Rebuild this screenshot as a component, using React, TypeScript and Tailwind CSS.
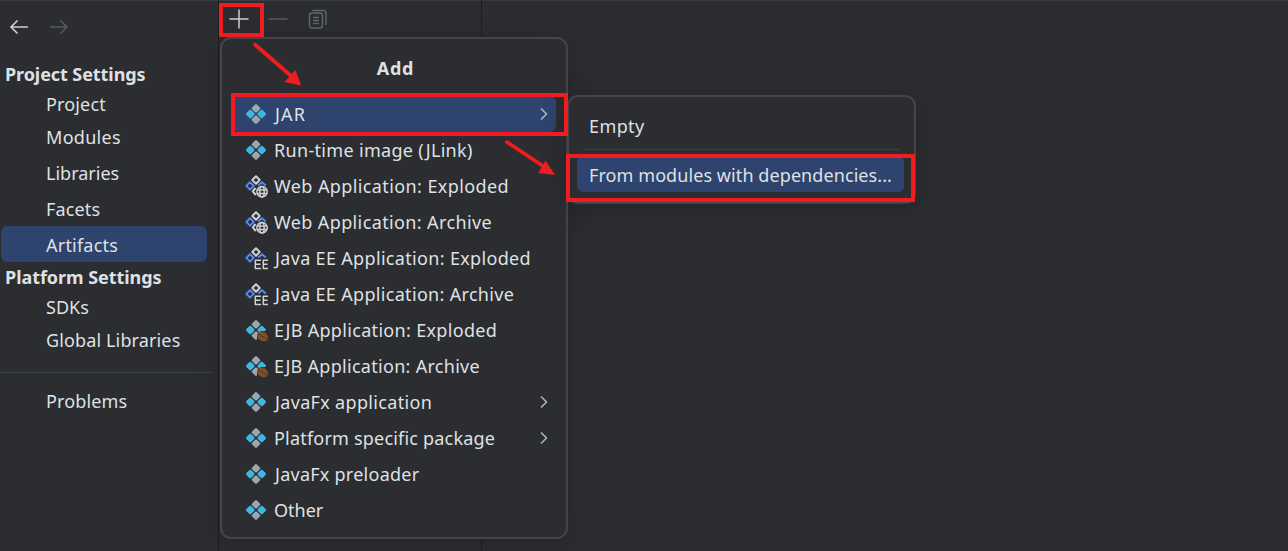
import type { ReactNode } from "react";

type IconKind = "plain" | "web" | "ee" | "ejb";

interface MenuEntry {
  label: string;
  icon: IconKind;
  submenu?: boolean;
  selected?: boolean;
  tracking: string;
}

const entries: MenuEntry[] = [
  { label: "JAR", icon: "plain", submenu: true, selected: true, tracking: "tracking-[1.2px]" },
  { label: "Run-time image (JLink)", icon: "plain", tracking: "tracking-[0.32px]" },
  { label: "Web Application: Exploded", icon: "web", tracking: "tracking-[0.4px]" },
  { label: "Web Application: Archive", icon: "web", tracking: "tracking-[0.38px]" },
  { label: "Java EE Application: Exploded", icon: "ee", tracking: "tracking-[0.33px]" },
  { label: "Java EE Application: Archive", icon: "ee", tracking: "tracking-[0.32px]" },
  { label: "EJB Application: Exploded", icon: "ejb", tracking: "tracking-[0.32px]" },
  { label: "EJB Application: Archive", icon: "ejb", tracking: "tracking-[0.29px]" },
  { label: "JavaFx application", icon: "plain", submenu: true, tracking: "tracking-[0.33px]" },
  { label: "Platform specific package", icon: "plain", submenu: true, tracking: "tracking-[0.2px]" },
  { label: "JavaFx preloader", icon: "plain", tracking: "tracking-[0.25px]" },
  { label: "Other", icon: "plain", tracking: "tracking-normal" },
];

function Diamond({ x, y, className }: { x: number; y: number; className: string }) {
  return (
    <rect
      x={x - 3.4}
      y={y - 3.4}
      width="6.8"
      height="6.8"
      rx="1.3"
      transform={`rotate(45 ${x} ${y})`}
      className={className}
    />
  );
}

function ArtifactIcon({ kind }: { kind: IconKind }) {
  if (kind === "plain" || kind === "ejb") {
    return (
      <svg viewBox="0 0 24 24" className="size-6 shrink-0">
        <Diamond x={12} y={6.3} className="fill-[#9aa7b0]" />
        <Diamond x={6.3} y={12} className="fill-[#40b6e0]" />
        <Diamond x={17.7} y={12} className="fill-[#40b6e0]" />
        <Diamond x={12} y={17.7} className="fill-[#9aa7b0]" />
        {kind === "ejb" && (
          <>
            <path d="M13 24V17.500L17 12.500H24V24Z" className="fill-[#2b2d30]" />
            <path d="M13.500 13H22l-3.200-3.500Z" className="fill-[#40b6e0]" />
            <ellipse cx="18.6" cy="18.4" rx="5.8" ry="4.5" transform="rotate(35 18.6 18.4)" className="fill-[#825027]" />
            <path d="M14 16.200c3 .2 3 2.400 5 2.600s2 1.600 4 2.400" className="fill-none stroke-[#4a321d]" strokeWidth="1" />
          </>
        )}
      </svg>
    );
  }
  return (
    <svg viewBox="0 0 24 24" className="size-6 shrink-0 fill-none" strokeWidth="2" strokeLinejoin="round">
      <path d="M12 2.300 15.700 6 12 9.700 8.300 6Z" className="stroke-[#ced0d6]" />
      <path d="M6 8.200 9.700 11.900 6 15.600 2.300 11.900Z" className="stroke-[#548af7]" />
      <path d="M14.200 11.400 18 8.300 21.800 11.400" className="stroke-[#548af7]" />
      {kind === "web" ? (
        <>
          <path d="M11.500 14 8.800 17.300 11.800 21" className="stroke-[#ced0d6]" />
          <g className="stroke-[#ced0d6]" strokeWidth="1.5">
            <circle cx="18" cy="17.700" r="5.200" />
            <ellipse cx="18" cy="17.700" rx="2.200" ry="5.200" />
            <path d="M13 16h10M13 19.500h10" />
          </g>
        </>
      ) : (
        <path d="M17 14.200h-5.700v8.400H17M11.300 18.300H16.500M24 14.200h-4.700v8.400h5M19.300 18.300h4.200" className="stroke-[#ced0d6]" strokeWidth="1.5" />
      )}
    </svg>
  );
}

function Chevron() {
  return (
    <svg viewBox="0 0 10 14" className="h-3.5 w-2.5 fill-none stroke-[#b4b8bf]" strokeWidth="1.5">
      <path d="M2 1.500 7.500 7 2 12.500" />
    </svg>
  );
}

function NavItem({ children, className }: { children: ReactNode; className: string }) {
  return <div className={`flex items-center pl-[46px] ${className}`}>{children}</div>;
}

function Sidebar() {
  return (
    <nav className="flex h-full w-[218px] shrink-0 flex-col">
      <div className="flex h-[59px] items-start gap-[21px] pt-[18px] pl-[9px]">
        <svg viewBox="0 0 20 18" className="h-[18px] w-5 fill-none stroke-[#ced0d6]" strokeWidth="1.6">
          <path d="M19 9H2M8.500 2.500 2 9l6.500 6.500" />
        </svg>
        <svg viewBox="0 0 20 18" className="h-[18px] w-5 fill-none stroke-[#57595e]" strokeWidth="1.6">
          <path d="M0 9H17M10.500 2.500 17 9l-6.500 6.500" />
        </svg>
      </div>
      <h2 className="flex h-[29px] items-center pt-0.5 pl-[5px] text-[18px] font-bold tracking-[-0.08px]">Project Settings</h2>
      <NavItem className="h-8 tracking-[0.15px]">Project</NavItem>
      <NavItem className="h-[35px] tracking-[0.3px]">Modules</NavItem>
      <NavItem className="h-9">Libraries</NavItem>
      <NavItem className="h-9 tracking-[0.15px]">Facets</NavItem>
      <div className="-mt-px mr-[11px] ml-px flex h-9 items-center rounded-md bg-[#2e436e] pt-0.5 pl-[45px] tracking-[0.22px]">
        Artifacts
      </div>
      <h2 className="flex h-[29px] items-center pt-0.5 pl-[5px] text-[18px] font-bold tracking-[-0.05px]">Platform Settings</h2>
      <NavItem className="h-8">SDKs</NavItem>
      <NavItem className="h-[35px] tracking-[0.13px]">Global Libraries</NavItem>
      <div className="mt-3.5 h-px w-[212px] bg-[#3d4047]" />
      <NavItem className="mt-2.5 h-9 tracking-[0.15px]">Problems</NavItem>
    </nav>
  );
}

function AddMenu() {
  return (
    <div className="absolute top-[37px] left-[220px] h-[502px] w-[348px] rounded-[11px] border-2 border-[#43454a] bg-[#2b2d30] shadow-[0_4px_24px_rgba(0,0,0,0.2)]">
      <h3 className="flex h-[57px] items-center justify-center pt-0.5 pl-[3px] text-[18px] font-bold tracking-[0.8px]">Add</h3>
      <ul>
        {entries.map((e) => (
          <li
            key={e.label}
            className={`mr-2.5 ml-[11px] flex h-9 items-center rounded-md pl-[11px] ${e.selected ? "bg-[#2e436e]" : ""}`}
          >
            <ArtifactIcon kind={e.icon} />
            <span className={`grow whitespace-nowrap ${e.label.startsWith("J") ? "pl-[7px]" : "pl-1.5"} ${e.tracking}`}>
              {e.label}
            </span>
            {e.submenu && (
              <span className="mr-[7px] flex">
                <Chevron />
              </span>
            )}
          </li>
        ))}
      </ul>
    </div>
  );
}

function JarSubmenu() {
  return (
    <div className="absolute top-[95px] left-[567px] h-[109px] w-[349px] rounded-[11px] border-2 border-[#43454a] bg-[#2b2d30] pt-[11px] pr-2.5 pl-2 shadow-[0_4px_24px_rgba(0,0,0,0.2)]">
      <div className="flex h-9 items-center pl-3 tracking-[0.4px]">Empty</div>
      <div className="mt-[5px] mr-1 mb-1.5 ml-1.5 h-px bg-[#3c3e43]" />
      <div className="flex h-9 items-center rounded-md bg-[#2e436e] pt-0.5 pl-3 tracking-[0.08px] whitespace-nowrap">
        From modules with dependencies...
      </div>
    </div>
  );
}

function Annotations() {
  return (
    <>
      <div className="absolute top-[3px] left-[219px] h-[34px] w-[45px] border-4 border-[#f01c22]" />
      <div className="absolute top-[93px] left-[231px] h-[43px] w-[337px] border-4 border-[#f01c22]" />
      <div className="absolute top-[154px] left-[566px] h-[48px] w-[349px] border-4 border-[#f01c22]" />
      <svg viewBox="0 0 50 46" className="absolute top-[41px] left-[252px] h-[46px] w-[50px] fill-[#f01c22]">
        <path d="M3 3.500 38 34" className="stroke-[#f01c22]" strokeWidth="3.8" strokeLinecap="round" />
        <path d="M49 44.500 32.500 41 36.500 36.500 39.500 33 43.500 29Z" />
      </svg>
      <svg viewBox="0 0 52 38" className="absolute top-[139px] left-[504px] h-[38px] w-[52px] fill-[#f01c22]">
        <path d="M3 3 39 27" className="stroke-[#f01c22]" strokeWidth="3.8" strokeLinecap="round" />
        <path d="M51 36 34.500 34 37 29 41.500 21.500Z" />
      </svg>
    </>
  );
}

export default function App() {
  return (
    <main className="relative flex h-[551px] w-[1288px] overflow-hidden bg-[#2b2d30] font-['Noto_Sans',sans-serif] text-[18px] text-[#dfe1e5] shadow-[inset_0_1px_0_#393b40]">
      <Sidebar />
      <section className="flex h-full w-[264px] shrink-0 items-start border-x border-[#1e1f22] pt-[9px] pl-[10px]">
        <svg viewBox="0 0 20 20" className="size-5 stroke-[#ced0d6]" strokeWidth="1.5">
          <path d="M10 .500v19M.500 10h19" />
        </svg>
        <svg viewBox="0 0 20 20" className="ml-[19px] size-5 stroke-[#57595e]" strokeWidth="1.5">
          <path d="M.500 10h19" />
        </svg>
        <svg viewBox="0 0 20 20" className="ml-5 size-5 fill-none stroke-[#63666c]" strokeWidth="1.4">
          <rect x="1.500" y="4" width="13" height="15" rx="2.500" />
          <path d="M4.500 1.500H15q3 0 3 3V16M5 8.500h6M5 11.500h6M5 14.500h6" />
        </svg>
      </section>
      <AddMenu />
      <JarSubmenu />
      <Annotations />
    </main>
  );
}
